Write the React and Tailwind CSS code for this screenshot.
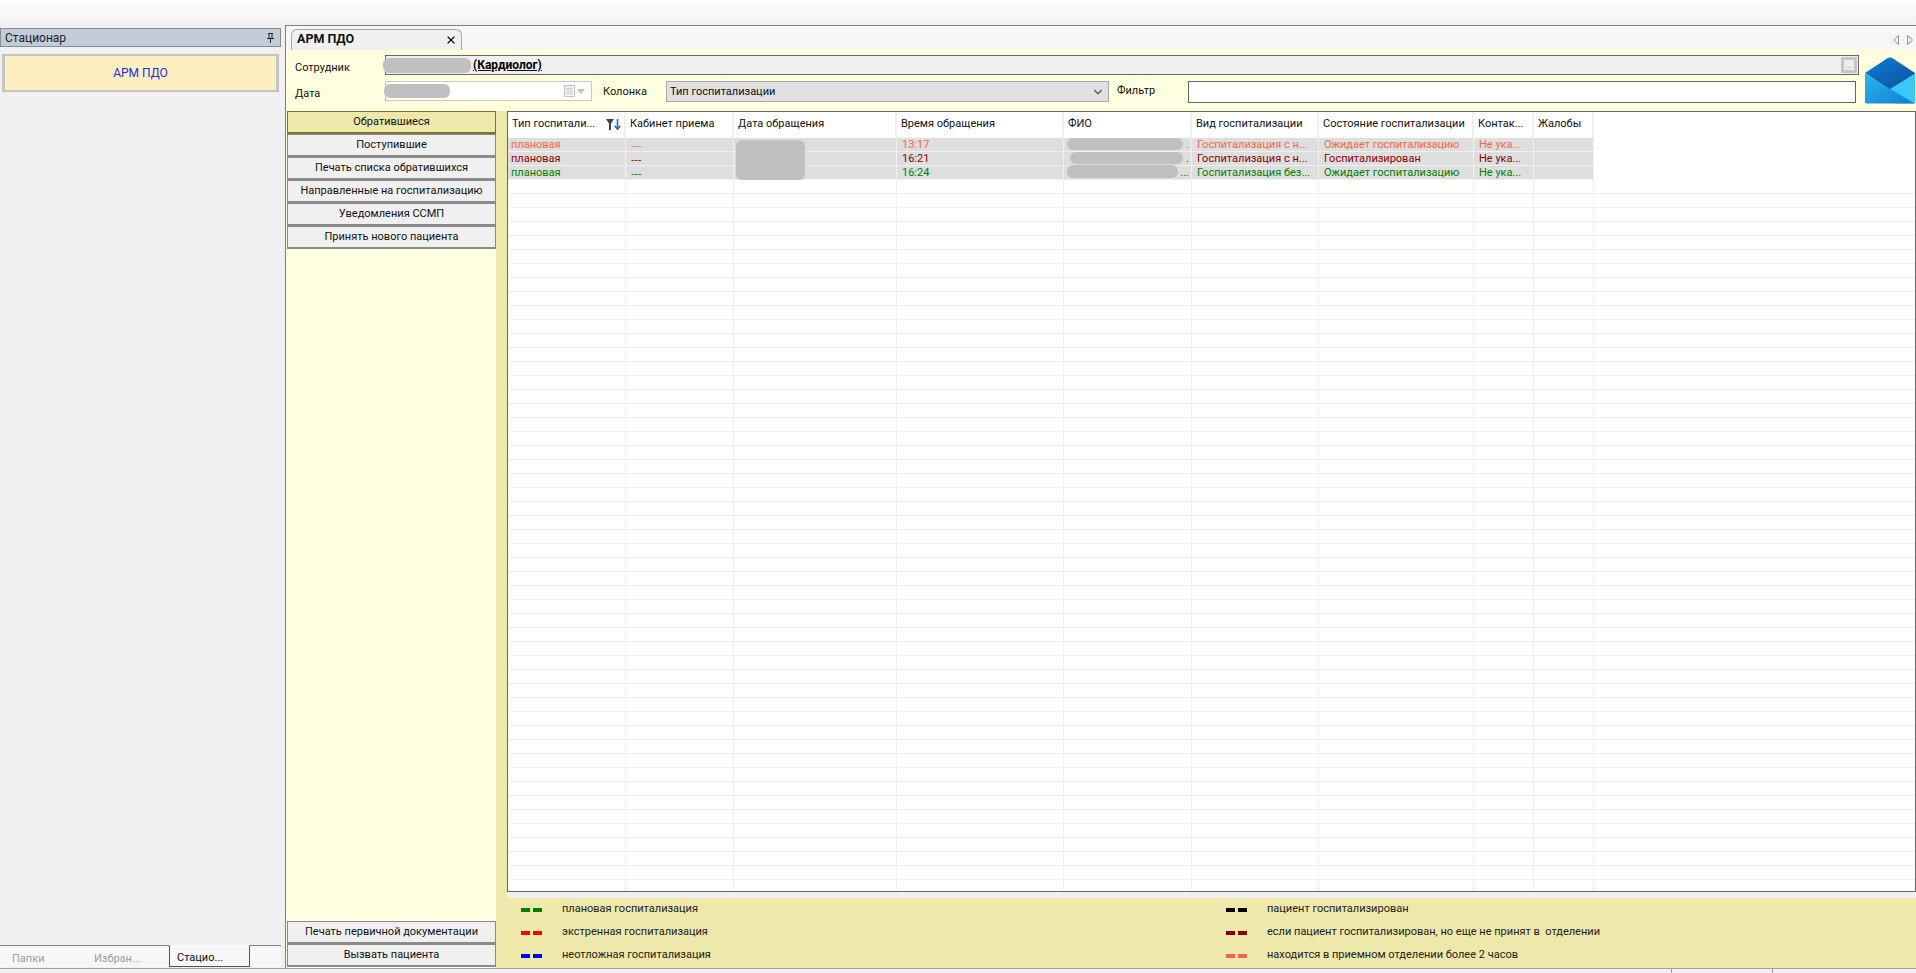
import { X, ChevronDown } from 'lucide-react';

const font = 'font-["Roboto","Noto_Sans",sans-serif]';

const columns = [
  { title: 'Тип госпитали...', width: 'w-[118px]' },
  { title: 'Кабинет приема', width: 'w-[108px]' },
  { title: 'Дата обращения', width: 'w-[163px]' },
  { title: 'Время обращения', width: 'w-[167px]' },
  { title: 'ФИО', width: 'w-[128px]' },
  { title: 'Вид госпитализации', width: 'w-[127px]' },
  { title: 'Состояние госпитализации', width: 'w-[155px]' },
  { title: 'Контак...', width: 'w-[60px]' },
  { title: 'Жалобы', width: 'w-[60px]' },
];

const rows = [
  {
    color: 'text-[#ff6347]',
    cells: ['плановая', '---', '', '13:17', '.', 'Госпитализация с н...', 'Ожидает госпитализацию', 'Не ука...', ''],
  },
  {
    color: 'text-[#8b0000]',
    cells: ['плановая', '---', '', '16:21', '.', 'Госпитализация с н...', 'Госпитализирован', 'Не ука...', ''],
  },
  {
    color: 'text-[#008000]',
    cells: ['плановая', '---', '', '16:24', '...', 'Госпитализация без...', 'Ожидает госпитализацию', 'Не ука...', ''],
  },
];

const emptyRows = [...Array(51)];

const topButtons = [
  'Поступившие',
  'Печать списка обратившихся',
  'Направленные на госпитализацию',
  'Уведомления ССМП',
  'Принять нового пациента',
];

const legendLeft = [
  { color: 'bg-[#008000]', label: 'плановая госпитализация' },
  { color: 'bg-[#ff0000]', label: 'экстренная госпитализация' },
  { color: 'bg-[#0000ff]', label: 'неотложная госпитализация' },
];

const legendRight = [
  { color: 'bg-black', label: 'пациент госпитализирован' },
  { color: 'bg-[#8b0000]', label: 'если пациент госпитализирован, но еще не принят в  отделении' },
  { color: 'bg-[#ff6347]', label: 'находится в приемном отделении более 2 часов' },
];

function SideButton({ children, active = false }) {
  return (
    <div
      className={`h-[23px] flex items-center justify-center border border-b-2 text-[11px] text-[#111] ${
        active ? 'bg-[#eee8aa] border-[#7d7230]' : 'bg-[#f0f0f0] border-[#8a8a8a]'
      }`}
    >
      {children}
    </div>
  );
}

function LegendItem({ color, label }) {
  return (
    <div className="h-[23px] flex items-center">
      <span className={`w-[9px] h-1 ${color}`} />
      <span className={`w-[9px] h-1 ml-[3px] ${color}`} />
      <span className="ml-5 text-[11px] text-[#222] whitespace-pre">{label}</span>
    </div>
  );
}

function Blur({ className }) {
  return <div className={`absolute bg-[#c0c0c0] rounded-[6px] ${className}`} />;
}

function SortIcon() {
  return (
    <svg width="15" height="11" viewBox="0 0 15 11" className="shrink-0">
      <path d="M0 0h8L5 4.500V11H3V4.500z" fill="#444" />
      <path d="M11.500 0v10M8.700 6.800l2.800 3.400 2.800-3.400" fill="none" stroke="#1b6fc2" strokeWidth="1.6" />
    </svg>
  );
}

function MailIcon() {
  return (
    <svg width="50" height="47" viewBox="0 0 50 47">
      <defs>
        <linearGradient id="flap" x1="0" y1="0" x2="1" y2="1">
          <stop offset="0" stopColor="#0a7fdc" />
          <stop offset="1" stopColor="#0f4f92" />
        </linearGradient>
        <linearGradient id="front" x1="0" y1="0" x2="1" y2="1">
          <stop offset="0" stopColor="#2cb4ee" />
          <stop offset="1" stopColor="#0d7fd6" />
        </linearGradient>
      </defs>
      <path d="M0 16 22 1.500q3-2 6 0L50 16v4L25 33 0 16z" fill="url(#flap)" />
      <path d="M25 32 50 16.500V45q0 1.500-1.500 1.500H30z" fill="#3bc8f6" />
      <path d="M0 16.500 25 32 50 46.500H2q-2 0-2-2z" fill="url(#front)" />
    </svg>
  );
}

export default function App() {
  return (
    <div className={`w-[1916px] h-[973px] overflow-hidden bg-[#f0f0f0] flex flex-col ${font}`}>
      {/* Ribbon stub */}
      <div className="h-[25px] shrink-0 bg-gradient-to-b from-white to-[#f0f0f0]" />

      <div className="h-[943px] flex">
        {/* Left dock */}
        <aside className="w-[281px] shrink-0 flex flex-col pt-[3px]">
          <div className="h-[19px] flex items-center justify-between bg-[#bfccd9] border border-[#8a8a8a] pl-1 pr-[5px] text-[12px] text-[#222]">
            <span>Стационар</span>
            <svg width="9" height="10" viewBox="0 0 9 10">
              <path d="M2 .5h5M3 .5v5M6 .5v5M1 5.500h7M4.500 5.500V10" fill="none" stroke="#222" />
            </svg>
          </div>
          <div className="mt-[7px] mx-[2px] h-[38px] border-x-[3px] border-y-2 border-[#c4c4c4] bg-[#fdf0c0] flex items-center justify-center text-[12px] text-[#2a2af0]">
            АРМ ПДО
          </div>
          <div className="mt-auto h-[22px] flex items-stretch bg-[#f7f7f7] text-[11px] text-[#a0a0a0] border-t border-[#808080]">
            <span className="w-[94px] pl-3 pt-[5px] flex items-center">Папки</span>
            <span className="w-[75px] pt-[5px] flex items-center">Избран...</span>
            <span className="w-[81px] pl-[7px] pt-[5px] -mt-px flex items-center bg-[#f7f7f7] border-x border-b border-[#555] border-t border-t-[#f7f7f7] text-[#111]">
              Стацио...
            </span>
          </div>
          <div className="h-px" />
        </aside>

        {/* Main document */}
        <main className="ml-1 flex-1 min-w-0 flex flex-col border-t border-l border-[#808080]">
          <div className="h-[24px] shrink-0 flex items-end justify-between bg-[#f7f7f7] pl-[5px]">
            <div className="w-[171px] h-[21px] flex items-center justify-between pl-[5px] pr-1 bg-[#f0f0f0] border border-b-0 border-[#a8a8a8] rounded-t-[6px]">
              <span className="text-[12.5px] font-bold text-[#111] pb-px">АРМ ПДО</span>
              <X size={12} strokeWidth={2.5} className="text-[#111]" />
            </div>
            <div className="flex gap-2 pr-[3px] pb-[5px]">
              <svg width="6" height="10" viewBox="0 0 6 10"><path d="M5.500.5v9L.5 5z" fill="none" stroke="#999" /></svg>
              <svg width="6" height="10" viewBox="0 0 6 10"><path d="M.5.5v9l5-4.500z" fill="none" stroke="#999" /></svg>
            </div>
          </div>

          {/* Filter header */}
          <div className="h-[61px] shrink-0 flex bg-[#ffffe0] text-[11px] text-[#111]">
            <div className="w-[99px] shrink-0 pl-[9px] flex flex-col">
              <span className="mt-[11px] h-[14px] leading-[14px]">Сотрудник</span>
              <span className="mt-[12px] h-[14px] leading-[14px]">Дата</span>
            </div>
            <div className="w-[1474px] shrink-0 pt-[5px] flex flex-col">
              <div className="relative h-[20px] w-full flex items-center justify-between border border-[#666] bg-[#f0f0f0]">
                <Blur className="-left-[3px] top-[2px] w-[88px] h-[15px]" />
                <span className="ml-[87px] pb-px font-bold underline text-[12px] text-black">(Кардиолог)</span>
                <span className="w-4 h-4 mr-[1px] border-[3px] border-[#c4c4c4] bg-[#ececec] flex items-center justify-center text-[9px] leading-none text-[#999]">
                  ...
                </span>
              </div>
              <div className="mt-[6px] flex items-start">
                <div className="relative w-[207px] h-[20px] shrink-0 flex items-center justify-end gap-[2px] pr-[6px] bg-white border border-[#c8c8c8]">
                  <Blur className="-left-[2px] top-[2px] w-[66px] h-[14px]" />
                  <svg width="11" height="12" viewBox="0 0 11 12">
                    <path d="M.5.5h10v11H.500z" fill="#f4f4f4" stroke="#c0c0c0" />
                    <path d="M2 3.500h7M2 6h7M2 8.500h7M4 2v8M7 2v8" stroke="#d0d0d0" />
                  </svg>
                  <span className="w-0 h-0 border-x-[4px] border-x-transparent border-t-[5px] border-t-[#c0c0c0]" />
                </div>
                <span className="ml-[11px] w-[63px] shrink-0 pt-[3px]">Колонка</span>
                <div className="w-[443px] h-[21px] shrink-0 flex items-center justify-between pl-[3px] pr-[3px] bg-[#e0e0e0] border border-[#a8a8a8]">
                  <span className="pt-px">Тип госпитализации</span>
                  <ChevronDown size={14} className="text-[#555]" />
                </div>
                <span className="ml-[8px] w-[71px] shrink-0 pt-[2px]">Фильтр</span>
                <div className="w-[668px] h-[22px] shrink-0 bg-white border border-[#666]" />
              </div>
            </div>
            <div className="ml-[6px] pt-[7px] shrink-0">
              <MailIcon />
            </div>
          </div>

          <div className="flex-1 min-h-0 flex">
            {/* Side actions */}
            <div className="w-[210px] shrink-0 pl-[1px] flex flex-col bg-[#ffffe0]">
              <SideButton active>Обратившиеся</SideButton>
              {topButtons.map((label) => (
                <SideButton key={label}>{label}</SideButton>
              ))}
              <div className="mt-auto">
                <SideButton>Печать первичной документации</SideButton>
                <SideButton>Вызвать пациента</SideButton>
              </div>
              <div className="h-[1px]" />
            </div>

            <div className="flex-1 min-w-0 flex flex-col">
              <div className="h-[781px] shrink-0 flex bg-[#eee8aa]">
                <div className="w-[11px] shrink-0" />
                {/* Grid */}
                <div className="relative flex-1 min-w-0 overflow-hidden bg-white border border-[#666] text-[11px]">
                  <div className="flex h-[26px]">
                    {columns.map((col, i) => (
                      <div
                        key={col.title}
                        className={`${col.width} shrink-0 flex items-center justify-between pl-1 pr-[3px] pb-[2px] border-r-2 border-[#f0f0f0] text-[#111] whitespace-nowrap`}
                      >
                        <span>{col.title}</span>
                        {i === 0 && <SortIcon />}
                      </div>
                    ))}
                  </div>
                  {rows.map((row, r) => (
                    <div key={r} className={`flex h-[14px] leading-[13px] ${row.color}`}>
                      {columns.map((col, i) => (
                        <div
                          key={col.title}
                          className={`${col.width} shrink-0 overflow-hidden whitespace-nowrap bg-[#dedede] border-r border-b border-[#f0f0f0] ${
                            i === 0 ? 'pl-[3px]' : 'pl-[5px]'
                          } ${i === 1 ? 'font-["Open_Sans",sans-serif]' : ''} ${i === 4 ? 'text-right pr-[2px]' : ''}`}
                        >
                          {row.cells[i]}
                        </div>
                      ))}
                    </div>
                  ))}
                  {emptyRows.map((_, r) => (
                    <div key={r} className="flex h-[14px]">
                      {columns.map((col) => (
                        <div key={col.title} className={`${col.width} shrink-0 border-r border-b border-[#f0f0f0]`} />
                      ))}
                      <div className="flex-1 border-b border-[#f0f0f0]" />
                    </div>
                  ))}
                  <Blur className="left-[228px] top-[28px] w-[69px] h-[40px]" />
                  <Blur className="left-[559px] top-[26px] w-[116px] h-[12px]" />
                  <Blur className="left-[562px] top-[40px] w-[113px] h-[12px]" />
                  <Blur className="left-[559px] top-[53px] w-[111px] h-[13px]" />
                </div>
              </div>

              <div className="h-[6px] shrink-0 flex bg-[#f0f0f0]">
                <div className="w-[11px] bg-[#eee8aa]" />
              </div>

              {/* Legend */}
              <div className="flex-1 min-h-0 flex bg-[#eee8aa] pl-[25px]">
                <div className="w-[705px] shrink-0">
                  {legendLeft.map((item) => (
                    <LegendItem key={item.label} {...item} />
                  ))}
                </div>
                <div>
                  {legendRight.map((item) => (
                    <LegendItem key={item.label} {...item} />
                  ))}
                </div>
              </div>
            </div>
          </div>
        </main>
      </div>

      {/* Status bar */}
      <div className="flex-1 flex border-t border-[#a0a0a0] bg-[#f0f0f0]">
        <div className="w-[1672px] border-r border-[#a0a0a0]" />
        <div className="w-[101px] border-r border-[#a0a0a0]" />
      </div>
    </div>
  );
}
